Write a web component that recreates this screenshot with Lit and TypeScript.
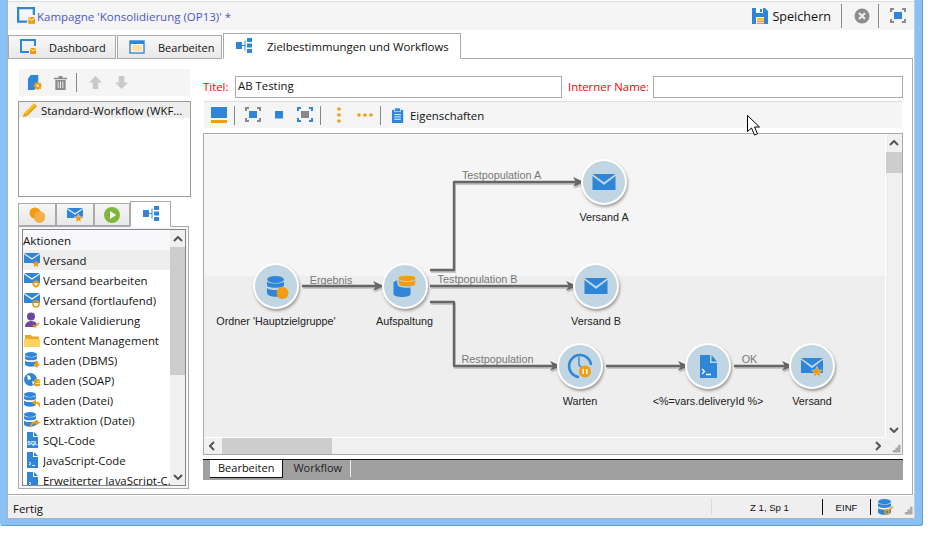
import { LitElement, css, html, svg, nothing } from "lit";
import { customElement } from "lit/decorators.js";

const BLUE = "#2f86d8";
const ORANGE = "#f39c12";
const DISC = "#c1d5e3";

// small icons, all drawn in a 16x16 box unless stated otherwise
const env = (x = 0, y = 2, w = 16, h = 11) => svg`
  <path fill="${BLUE}" d="M${x} ${y}h${w}l-${w / 2} ${h * 0.52}z"/>
  <path fill="${BLUE}" d="M${x} ${y + h * 0.12}l${w / 2} ${h * 0.56}l${w / 2} -${h * 0.56}v${h * 0.88}h-${w}z"/>`;
const star = (cx: number, cy: number, r: number, halo = "none") => {
  const pts: string[] = [];
  for (let i = 0; i < 10; i++) {
    const a = -Math.PI / 2 + (i * Math.PI) / 5;
    const q = i % 2 ? r * 0.42 : r;
    pts.push(`${(cx + q * Math.cos(a)).toFixed(1)},${(cy + q * Math.sin(a)).toFixed(1)}`);
  }
  return svg`<polygon fill="${ORANGE}" stroke="${halo}" paint-order="stroke" points="${pts.join(" ")}"/>`;
};
// three stacked discs, 12 wide and about 15 high before scaling
const db = (x = 1, y = 0, w = 12, c = BLUE) => svg`
  <g fill="${c}" transform="translate(${x} ${y}) scale(${w / 12})">
    <ellipse cx="6" cy="2.5" rx="6" ry="2.5"/>
    <path d="M0 3.8c1.5 2 10.5 2 12 0v3c-1.5 2-10.5 2-12 0z"/>
    <path d="M0 8.4c1.5 2 10.5 2 12 0v4c-1.5 3-10.5 3-12 0z"/>
  </g>`;
const doc = (extra = nothing as unknown) => svg`
  <path fill="${BLUE}" d="M3 0h6v5h5v11H3z"/><path fill="${BLUE}" d="M10 0l4 4h-4z"/>${extra}`;
const term = svg`<path fill="none" stroke="#fff" d="M5 10l2 1.5L5 13M8 13.5h3"/>`;
const i16 = (c: unknown, size = 16) =>
  html`<svg class="ic" width="${size}" height="${size}" viewBox="0 0 16 16">${c}</svg>`;

const campaign = svg`
  <path fill="none" stroke="${BLUE}" stroke-width="2" d="M9 13H1V1h14v6"/>
  <rect x="10" y="9" width="6" height="6" fill="${ORANGE}"/>
  <path fill="none" stroke="#fff" stroke-width=".8" d="M10 9.5l3 2.5 3-2.5"/>`;
const editWin = svg`
  <rect x="1" y="2" width="14" height="12" fill="#fff" stroke="${BLUE}" stroke-width="1.4"/>
  <rect x="1" y="2" width="14" height="3" fill="${BLUE}"/>
  <rect x="2.5" y="6" width="11" height="6.5" fill="#fbe3ae"/>`;
const flow = svg`
  <rect x="0" y="4" width="6" height="7" fill="${BLUE}"/>
  <path fill="none" stroke="${BLUE}" d="M6 7.5h3M9 2.5v10"/>
  <rect x="11" y="0" width="5" height="4" fill="${BLUE}"/>
  <rect x="11" y="5.5" width="5" height="4" fill="${BLUE}"/>
  <rect x="11" y="11" width="5" height="4" fill="${BLUE}"/>`;
const fitCorners = (c: string) => svg`
  <path fill="none" stroke="${c}" stroke-width="2" d="M1 4V1h3M12 1h3v3M15 11v3h-3M4 14H1v-3"/>`;
const expand = svg`${fitCorners("#8a8a8a")}<rect x="4" y="4" width="8" height="7" fill="${BLUE}"/>`;
const shrink = svg`${fitCorners(BLUE)}<rect x="4" y="4" width="8" height="7" fill="#888"/>`;
const disk = svg`
  <path fill="${BLUE}" d="M0 0h13l3 3v13H0z"/>
  <rect x="4" y="0" width="7" height="5" fill="#fff"/><rect x="8" y="1" width="2" height="3" fill="${BLUE}"/>
  <rect x="4" y="9" width="8" height="7" fill="#fff"/>
  <path stroke="${ORANGE}" stroke-width="1.4" d="M5 11h7M5 13.2h7M5 15.4h7"/>`;
const closeBtn = svg`
  <circle cx="8" cy="8" r="7.5" fill="#8c8c8c"/>
  <path stroke="#eee" stroke-width="2.2" d="M5 5l6 6M11 5l-6 6"/>`;
const trash = svg`
  <path fill="#8a8a8a" d="M1 3h14v1.6H1zM6 1h4v2H6z"/><path fill="#8a8a8a" d="M2.5 5.4h11V16h-11z"/>
  <path stroke="#f5f5f5" d="M5.5 7v7M8 7v7M10.5 7v7"/>`;
const newWf = svg`
  <path fill="${BLUE}" d="M4 0h8v8l-4 8H1V4z"/>
  <circle cx="11.5" cy="11.5" r="3.6" fill="${ORANGE}"/>
  <path stroke="${ORANGE}" stroke-width="1.2" d="M11.5 6.8v9.4M6.8 11.5h9.4M8.3 8.3l6.4 6.4M14.7 8.3l-6.4 6.4"/>
  <circle cx="11.5" cy="11.5" r="1.3" fill="#fff"/>`;
const up = svg`<path fill="#c9c9c9" d="M8 1l7 7h-4v7H5V8H1z"/>`;
const down = svg`<path fill="#c9c9c9" d="M5 1h6v7h4l-7 7-7-7h4z"/>`;
const pencil = svg`
  <path fill="#f7c325" d="M12 1l3 3L5 14l-3-3z"/><path fill="#e89b0c" d="M2 11l3 3-4 1z"/>
  <path fill="#e0a010" d="M5 14L15 4l-1-1L3.6 12.4z"/>`;
const layoutIc = svg`<rect y="0" width="16" height="11" fill="${BLUE}"/><rect y="13" width="16" height="3" fill="${ORANGE}"/>`;
const dotsV = svg`<circle cx="8" cy="2" r="1.8" fill="${ORANGE}"/><circle cx="8" cy="8" r="1.8" fill="${ORANGE}"/><circle cx="8" cy="14" r="1.8" fill="${ORANGE}"/>`;
const dotsH = svg`<circle cx="2" cy="8" r="1.8" fill="${ORANGE}"/><circle cx="8" cy="8" r="1.8" fill="${ORANGE}"/><circle cx="14" cy="8" r="1.8" fill="${ORANGE}"/>`;
const clipboard = svg`
  <path fill="${BLUE}" d="M1 2h12v14H1z"/><rect x="4" y="0" width="6" height="4" fill="${BLUE}" stroke="#f5f5f5" stroke-width=".7"/>
  <path stroke="#fff" d="M3.5 7h7M3.5 9.5h7M3.5 12h7"/>`;
const gear = (cx: number, cy: number, r = 2.4) => svg`
  <circle cx="${cx}" cy="${cy}" r="${r}" fill="none" stroke="${ORANGE}" stroke-width="1.7"/>
  <path stroke="${ORANGE}" d="M${cx} ${cy - r - 1.7}v1M${cx} ${cy + r + .7}v1M${cx - r - 1.7} ${cy}h1M${cx + r + .7} ${cy}h1"/>`;

const tabCircles = svg`<circle cx="6" cy="6" r="5.5" fill="${ORANGE}"/><circle cx="10.5" cy="10" r="5.5" fill="#f5b04a" stroke="${ORANGE}" stroke-width=".5"/>`;
const tabMail = svg`${env(0, 1, 16, 10)}${star(11.5, 11.5, 4.2, "#f0f0f0")}`;
const tabPlay = svg`<circle cx="8" cy="8" r="8" fill="#7db83a"/><path fill="#fff" d="M6 4l6 4-6 4z"/>`;

const ACTIONS: { label: string; icon: unknown }[] = [
  { label: "Versand", icon: svg`${env(0, 1, 16, 10)}${star(12, 12, 4)}` },
  { label: "Versand bearbeiten", icon: svg`${env(0, 1, 16, 10)}${gear(12, 12)}` },
  { label: "Versand (fortlaufend)", icon: svg`${env(0, 1, 16, 10)}<circle cx="12" cy="12" r="3" fill="none" stroke="${ORANGE}" stroke-width="1.6"/>` },
  { label: "Lokale Validierung", icon: svg`
      <circle cx="7" cy="4.5" r="4" fill="#6b4a9c"/><path fill="#6b4a9c" d="M1 15c0-4 3-6 6-6s5 1 6 3l-3 3z"/>
      <path fill="none" stroke="${ORANGE}" stroke-width="1.5" d="M9 13l2 2 4-4"/>` },
  { label: "Content Management", icon: svg`
      <path fill="#eaa92a" d="M1 3h6l1 1.5h7V8H1z"/><path fill="#fcd45f" d="M0 7h16v8H0z"/>` },
  { label: "Laden (DBMS)", icon: svg`${db(1, 0, 12)}<path fill="${ORANGE}" d="M11 9h3v3h2l-3.5 4L9 12h2z"/>` },
  { label: "Laden (SOAP)", icon: svg`
      <circle cx="6.5" cy="7.5" r="6.5" fill="${BLUE}"/><path fill="#fff" d="M3 3l3 1 1 3-3 1zM8 9l3 1-2 3z"/>${db(10, 7, 6, ORANGE)}` },
  { label: "Laden (Datei)", icon: svg`${db(0, 0, 12)}<path fill="none" stroke="${ORANGE}" stroke-width="1.8" d="M16 15c0-3-2-4.5-5-4.5"/><path fill="${ORANGE}" d="M12 7.5v6l-4-3z"/>` },
  { label: "Extraktion (Datei)", icon: svg`${db(0, 0, 12)}<path fill="none" stroke="${ORANGE}" stroke-width="1.8" d="M7 15c0-3 2-4.5 5-4.5"/><path fill="${ORANGE}" d="M12 7.5v6l4-3z"/>` },
  { label: "SQL-Code", icon: doc(svg`<text x="8.5" y="13" text-anchor="middle" class="sql">SQL</text>`) },
  { label: "JavaScript-Code", icon: doc(term) },
  { label: "Erweiterter JavaScript-C...", icon: doc(term) },
];

const NODES = [
  { x: 276, y: 286, label: "Ordner 'Hauptzielgruppe'", icon: svg`
      ${db(-9, -10, 17)}<circle cx="6.5" cy="7" r="6" fill="${ORANGE}"/>` },
  { x: 404.5, y: 286, label: "Aufspaltung", icon: svg`
      <path fill="${BLUE}" d="M-11.5 -3c0-4 17-4 17 0v11c0 4-17 4-17 0z"/>
      <path fill="${ORANGE}" stroke="${DISC}" stroke-width="1.4" d="M-7 -8c0-4 18-4 18 0v6c0 4-18 4-18 0z"/>
      <path fill="none" stroke="${DISC}" d="M-6.5 -7c2 3.5 15 3.5 17 0"/>` },
  { x: 604, y: 182, label: "Versand A", icon: env(-11.5, -8, 23, 16) },
  { x: 596, y: 286, label: "Versand B", icon: env(-11.5, -8, 23, 16) },
  { x: 580, y: 366, label: "Warten", icon: svg`
      <path fill="none" stroke="${BLUE}" stroke-width="2.5" d="M-1 11A11 11 0 1 1 11 -1"/>
      <path fill="none" stroke="${BLUE}" stroke-width="1.4" d="M-1 -9v8l4 4"/>
      <circle cx="5" cy="5.5" r="6" fill="${ORANGE}"/><path stroke="#fff" stroke-width="1.5" d="M3.2 3v5M6.8 3v5"/>` },
  { x: 708, y: 366, label: "<%=vars.deliveryId %>", icon: svg`
      <path fill="${BLUE}" d="M-8 -11h10v8h7v15h-17z"/><path fill="${BLUE}" d="M3.5 -11l5.5 6.5h-5.5z"/>
      <path fill="none" stroke="#fff" stroke-width="1.3" d="M-6 3l2.5 2.5L-6 8M-2 8.5h5"/>` },
  { x: 812, y: 366, label: "Versand", icon: svg`${env(-11, -8, 22, 15)}${star(5, 6, 5.5, DISC)}` },
];

const WIRES = [
  { d: "M302 286H376", label: "Ergebnis", lx: 331, ly: 280 },
  { d: "M430 270H454V182H576", label: "Testpopulation A", lx: 501.5, ly: 175 },
  { d: "M430 286H569", label: "Testpopulation B", lx: 477.5, ly: 279 },
  { d: "M430 302H454V366H553", label: "Restpopulation", lx: 497.5, ly: 359 },
  { d: "M606 366H681", label: "", lx: 0, ly: 0 },
  { d: "M734 366H785", label: "OK", lx: 749.5, ly: 359 },
];

@customElement("app-root")
export class AppRoot extends LitElement {
  protected render() {
    return html`
      <div class="window">
        <div class="client">
          ${this.renderHeader()}
          ${this.renderTabs()}
          <div class="pane">
            ${this.renderLeft()}
            ${this.renderRight()}
          </div>
          ${this.renderStatus()}
        </div>
      </div>
      <svg class="cursor" width="14" height="22" viewBox="0 0 14 22">
        <path fill="#fff" stroke="#000" d="M.5.5v16l4-3.5 3 7 3-1.2-3-6.8h5z"/>
      </svg>
    `;
  }

  private renderHeader() {
    return html`
      <header class="head">
        ${i16(campaign, 18)}
        <span class="title">Kampagne 'Konsolidierung (OP13)' *</span>
        <span class="spacer"></span>
        ${i16(disk)}
        <span class="save">Speichern</span>
        <i class="sep tall first"></i>
        ${i16(closeBtn)}
        <i class="sep tall"></i>
        ${i16(expand)}
      </header>
    `;
  }

  private renderTabs() {
    return html`
      <nav class="tabs">
        <div class="tab" style="width:108px">${i16(campaign)}<span>Dashboard</span></div>
        <div class="tab" style="width:105px">${i16(editWin)}<span>Bearbeiten</span></div>
        <div class="tab active" style="width:238px">${i16(flow)}<span>Zielbestimmungen und Workflows</span></div>
        <div class="tabline"></div>
      </nav>
    `;
  }

  private renderLeft() {
    return html`
      <aside class="left">
        <div class="bar lbar">
          ${i16(newWf, 15)}${i16(trash, 15)}
          <i class="sep"></i>
          ${i16(up, 15)}${i16(down, 15)}
        </div>
        <div class="wf-list">
          <div class="wf-row">${i16(pencil)}<span>Standard-Workflow (WKF...</span></div>
        </div>
        <div class="mini-tabs">
          <div class="mini">${i16(tabCircles)}</div>
          <div class="mini">${i16(tabMail)}</div>
          <div class="mini third">${i16(tabPlay)}</div>
          <div class="mini active">${i16(flow)}</div>
        </div>
        <div class="palette">
          <div class="actions">
            <div class="rows">
              <div class="act-head">Aktionen</div>
              ${ACTIONS.map(
                (a, i) => html`<div class="act ${i === 0 ? "sel" : ""}">${i16(a.icon)}<span>${a.label}</span></div>`
              )}
            </div>
            <div class="vscroll small">
              <svg width="10" height="6" viewBox="0 0 10 6"><path class="chev" d="M1 5l4-4 4 4"/></svg>
              <div class="thumb" style="height:128px"></div>
              <span class="spacer"></span>
              <svg width="10" height="6" viewBox="0 0 10 6"><path class="chev" d="M1 1l4 4 4-4"/></svg>
            </div>
          </div>
        </div>
      </aside>
    `;
  }

  private renderRight() {
    return html`
      <section class="right">
        <div class="fields">
          <label class="l1">Titel:</label>
          <div class="input grow1">AB Testing</div>
          <label class="l2">Interner Name:</label>
          <div class="input grow2"></div>
        </div>
        <div class="bar rbar">
          ${i16(layoutIc)}<i class="sep"></i>
          ${i16(expand)}
          <svg class="ic" width="16" height="16" viewBox="0 0 16 16"><rect x="4" y="4" width="8" height="7.5" fill="${BLUE}"/></svg>
          ${i16(shrink)}<i class="sep"></i>
          ${i16(dotsV)}${i16(dotsH)}<i class="sep"></i>
          ${i16(clipboard, 15)}
          <span class="props">Eigenschaften</span>
        </div>
        ${this.renderDiagram()}
        <div class="strip">
          <div class="strip-tab on">Bearbeiten</div>
          <div class="strip-tab">Workflow</div>
        </div>
      </section>
    `;
  }

  private renderDiagram() {
    return html`
      <div class="diagram">
        <div class="d-top">
          <div class="canvas">
            <div class="band"></div>
            <svg class="wires" width="682" height="304" viewBox="204 134 682 304">
              <defs>
                <marker id="head" markerWidth="14" markerHeight="12" refX="3" refY="6" orient="auto" markerUnits="userSpaceOnUse">
                  <path fill="#666" d="M0 1l11 5-11 5 3-5z"/>
                </marker>
                <marker id="head-sh" markerWidth="14" markerHeight="12" refX="3" refY="6" orient="auto" markerUnits="userSpaceOnUse">
                  <path fill="#c0c0c0" d="M0 1l11 5-11 5 3-5z"/>
                </marker>
              </defs>
              ${WIRES.map(
                (w) => svg`
                  <path d="${w.d}" transform="translate(1 2)" fill="none" stroke="#c6c6c6" stroke-width="2" marker-end="url(#head-sh)"/>
                  <path d="${w.d}" fill="none" stroke="#666" stroke-width="2.4" stroke-linejoin="round" marker-end="url(#head)"/>
                  ${w.label
                    ? svg`<text x="${w.lx}" y="${w.ly + 4}" text-anchor="middle" class="wire-label">${w.label}</text>`
                    : nothing}`
              )}
            </svg>
            ${NODES.map(
              (n) => html`
                <div class="node" style="left:${n.x - 204 - 60}px;top:${n.y - 134 - 23}px">
                  <div class="disc">
                    <svg width="30" height="30" viewBox="-15 -15 30 30">${n.icon}</svg>
                  </div>
                  <div class="node-label">${n.label}</div>
                </div>
              `
            )}
          </div>
          <div class="vscroll big">
            <svg width="10" height="6" viewBox="0 0 10 6"><path class="chev" d="M1 5l4-4 4 4"/></svg>
            <div class="thumb" style="height:21px"></div>
            <span class="spacer"></span>
            <svg width="10" height="6" viewBox="0 0 10 6"><path class="chev" d="M1 1l4 4 4-4"/></svg>
          </div>
        </div>
        <div class="hscroll">
          <svg width="6" height="10" viewBox="0 0 6 10"><path class="chev" d="M5 1L1 5l4 4"/></svg>
          <div class="hthumb"></div>
          <span class="spacer"></span>
          <svg width="6" height="10" viewBox="0 0 6 10"><path class="chev" d="M1 1l4 4-4 4"/></svg>
          ${this.grip()}
        </div>
      </div>
    `;
  }

  private grip() {
    return html`<svg class="grip" width="9" height="9" viewBox="0 0 9 9">
      <path fill="#aaa" d="M6 0h3v3H6zM3 3h3v3H3zM6 3h3v3H6zM0 6h3v3H0zM3 6h3v3H3zM6 6h3v3H6z" transform="scale(.85) translate(1 1)"/>
    </svg>`;
  }

  private renderStatus() {
    return html`
      <footer class="status">
        <span class="st-text">Fertig</span>
        <span class="spacer"></span>
        <i class="st-sep light"></i>
        <span class="st-pos">Z 1, Sp 1</span>
        <i class="st-sep"></i>
        <span class="st-ins">EINF</span>
        <i class="st-sep"></i>
        <svg class="st-db" width="16" height="16" viewBox="0 0 16 16">
          ${db(0, 0, 13)}
          <circle cx="9" cy="13" r="2" fill="none" stroke="${ORANGE}" stroke-width="1.4"/>
          <path stroke="${ORANGE}" stroke-width="1.6" d="M10.5 11.5l4.5-4"/>
        </svg>
        ${this.grip()}
      </footer>
    `;
  }

  static styles = css`
    :host {
      display: block;
      position: relative;
      width: 943px;
      height: 546px;
      background: #fff;
      font-family: "Open Sans", "Noto Sans", sans-serif;
      font-size: 11.4px;
      color: #111;
      overflow: hidden;
    }

    .spacer {
      flex: 1;
    }

    .ic {
      flex: none;
      display: block;
    }

    .sql {
      font: bold 5px "Liberation Sans", sans-serif;
      fill: #fff;
    }

    .window {
      box-sizing: border-box;
      width: 923px;
      height: 526px;
      padding: 0 8px 7px 7px;
      background: #8ac1f5;
      box-shadow: inset -1px -1px 0 #6d9cc8;
      border-radius: 0 0 3px 3px;
    }

    .client {
      box-sizing: border-box;
      height: 100%;
      display: flex;
      flex-direction: column;
      padding-top: 1px;
      background: #fff;
      border-left: 1px solid #a9b4c0;
      border-right: 1px solid #c4ccd4;
    }

    .head {
      box-sizing: border-box;
      flex: none;
      height: 29px;
      display: flex;
      align-items: center;
      padding: 0 8px 0 9px;
      background: #f5f5f5;
      border-top: 1px solid #ddd;
    }

    .title {
      margin-left: 2px;
      font-size: 11.5px;
      color: #4a55c8;
    }

    .save {
      margin-left: 4px;
      font-size: 12.6px;
      color: #111;
    }

    .sep {
      flex: none;
      display: block;
      width: 1px;
      height: 19px;
      background: #888;
    }

    .sep.tall {
      height: 24px;
      margin: 0 11px 0 8px;
    }

    .sep.tall.first {
      margin: 0 12px 0 10px;
    }

    .tabs {
      flex: none;
      height: 29px;
      display: flex;
      align-items: flex-end;
      background: #fff;
    }

    .tab {
      box-sizing: border-box;
      height: 24px;
      display: flex;
      align-items: center;
      gap: 13px;
      padding-left: 11px;
      font-size: 11px;
      background: linear-gradient(#f8f8f8, #e8e8e8);
      border: 1px solid #aaa;
      margin-right: 1px;
    }

    .tab.active {
      height: 26px;
      font-size: 11.4px;
      background: #fff;
      border-bottom-color: #fff;
      margin-right: 0;
      padding-left: 12px;
      gap: 15px;
    }

    .tabline {
      flex: 1;
      height: 0;
      border-bottom: 1px solid #aaa;
      border-right: 1px solid #aaa;
      margin-right: 1px;
    }

    .pane {
      flex: 1;
      min-height: 0;
      display: flex;
      gap: 12px;
      padding: 10px 9px 6px 10px;
      margin-right: 1px;
      border-right: 1px solid #aaa;
      border-bottom: 1px solid #aaa;
      background: #fff;
    }

    .left {
      flex: none;
      width: 173px;
      display: flex;
      flex-direction: column;
    }

    .bar {
      display: flex;
      align-items: center;
      background: #f5f5f5;
    }

    .lbar {
      height: 27px;
      margin-left: 1px;
      width: 171px;
      padding-left: 8px;
      gap: 11px;
      box-sizing: border-box;
      flex: none;
    }

    .lbar .sep {
      margin: 0 0 0 -3px;
    }

    .wf-list {
      flex: none;
      box-sizing: border-box;
      height: 96px;
      margin-top: 5px;
      border: 1px solid #999;
      background: #fff;
    }

    .wf-row {
      height: 16px;
      display: flex;
      align-items: center;
      gap: 3px;
      padding-left: 3px;
      background: #eee;
    }

    .mini-tabs {
      flex: none;
      display: flex;
      align-items: flex-end;
      height: 26px;
      margin-top: 3px;
    }

    .mini {
      box-sizing: border-box;
      width: 38px;
      height: 23px;
      display: flex;
      align-items: center;
      justify-content: center;
      background: linear-gradient(#f6f6f6, #e8e8e8);
      border: 1px solid #aaa;
    }

    .mini.third {
      width: 36px;
    }

    .mini.active {
      width: 41px;
      height: 26px;
      background: #fff;
      border-bottom: 1px solid #fff;
      margin-bottom: -1px;
      position: relative;
    }

    .palette {
      flex: none;
      box-sizing: border-box;
      height: 263px;
      width: 171px;
      border: 1px solid #aaa;
      padding: 2px 2px 2px 3px;
      background: #f7f7f7;
    }

    .actions {
      box-sizing: border-box;
      height: 100%;
      display: flex;
      border: 1px solid #808890;
      background: #fff;
      overflow: hidden;
    }

    .rows {
      flex: 1;
      min-width: 0;
      overflow: hidden;
    }

    .act-head {
      height: 20px;
      line-height: 21px;
      background: #f8f8fa;
      font-size: 11.6px;
    }

    .act {
      height: 20px;
      display: flex;
      align-items: center;
      gap: 3px;
      padding-left: 1px;
      white-space: nowrap;
    }

    .act span {
      overflow: hidden;
    }

    .act.sel {
      background: #eeeeee;
    }

    .vscroll {
      flex: none;
      width: 15px;
      display: flex;
      flex-direction: column;
      align-items: center;
      background: #f0f0f0;
    }

    .vscroll > svg {
      flex: none;
      margin: 6px 0 5px;
    }

    .thumb {
      flex: none;
      width: 100%;
      background: #cdcdcd;
    }

    .chev {
      fill: none;
      stroke: #555;
      stroke-width: 2;
    }

    .right {
      flex: 1;
      min-width: 0;
      display: flex;
      flex-direction: column;
    }

    .fields {
      flex: none;
      display: flex;
      align-items: center;
      margin-top: 7px;
      height: 22px;
    }

    .fields label {
      color: #f00;
      white-space: nowrap;
      margin-top: -2px;
    }

    .l1 {
      width: 32px;
    }

    .l2 {
      width: 85px;
    }

    .input {
      box-sizing: border-box;
      height: 22px;
      line-height: 18px;
      border: 1px solid #aaa;
      padding-left: 2px;
      background: #fff;
    }

    .grow1 {
      width: 327px;
      margin-right: 6px;
    }

    .grow2 {
      width: 250px;
    }

    .rbar {
      flex: none;
      box-sizing: border-box;
      height: 27px;
      margin: 3px 0 5px 1px;
      width: 698px;
      padding-left: 7px;
      gap: 5px;
      border-top: 1px solid #ddd;
    }

    .rbar .sep {
      margin: 0 5px 0 2px;
    }

    .rbar .ic + .ic {
      margin-left: 5px;
    }

    .props {
      margin-left: -1px;
    }

    .diagram {
      flex: none;
      box-sizing: border-box;
      width: 700px;
      height: 322px;
      display: flex;
      flex-direction: column;
      border: 1px solid #aaa;
      background: #f0f0f0;
    }

    .d-top {
      flex: 1;
      min-height: 0;
      display: flex;
    }

    .canvas {
      position: relative;
      flex: 1;
      overflow: hidden;
      background: #f5f5f5;
      border-bottom: 1px solid #fff;
      border-right: 1px solid #fff;
    }

    .band {
      position: absolute;
      left: 0;
      right: 0;
      top: 142px;
      bottom: 0;
      background: #eeeeee;
    }

    .wires {
      position: absolute;
      left: 0;
      top: 0;
    }

    .wire-label {
      font: 10.8px "Liberation Sans", Arial, sans-serif;
      fill: #777;
    }

    .node {
      position: absolute;
      width: 120px;
      display: flex;
      flex-direction: column;
      align-items: center;
    }

    .disc {
      box-sizing: border-box;
      width: 46px;
      height: 46px;
      border-radius: 50%;
      display: flex;
      align-items: center;
      justify-content: center;
      background: #c1d5e3;
      border: 2px solid #fff;
      box-shadow: 1px 2px 3px rgba(0, 0, 0, 0.35);
    }

    .node-label {
      margin-top: 5px;
      font: 10.8px/14px "Liberation Sans", Arial, sans-serif;
      color: #222;
      white-space: nowrap;
    }

    .vscroll.big {
      width: 16px;
    }

    .vscroll.big > svg:first-child {
      margin: 6px 0 6px;
    }

    .vscroll.big > svg:last-child {
      margin-bottom: 5px;
    }

    .hscroll {
      flex: none;
      height: 16px;
      display: flex;
      align-items: center;
      padding-left: 5px;
      padding-right: 0;
      background: #f0f0f0;
    }

    .hthumb {
      width: 110px;
      height: 100%;
      margin-left: 7px;
      background: #cdcdcd;
    }

    .hscroll .grip {
      margin: 4px 1px 0 11px;
    }

    .strip {
      flex: none;
      height: 21px;
      margin-top: 4px;
      display: flex;
      align-items: flex-start;
      padding-left: 7px;
      width: 700px;
      box-sizing: border-box;
      background: #a0a0a0;
      border-top: 1px solid #111;
      font-size: 11px;
    }

    .strip-tab {
      height: 17px;
      line-height: 16px;
      padding: 0 8px 0 10px;
      color: #222;
      border-right: 1px solid #eee;
    }

    .strip-tab.on {
      background: #fff;
      color: #111;
      padding: 0 8px;
      border-right: 1px solid #111;
      border-bottom: 1px solid #111;
    }

    .status {
      box-sizing: border-box;
      flex: none;
      height: 23px;
      display: flex;
      align-items: center;
      padding-left: 5px;
      margin-top: 1px;
      background: #efefef;
      border-bottom: 1px solid #a9b4c0;
    }

    .st-text {
      margin-top: 2px;
    }

    .st-sep {
      flex: none;
      width: 1px;
      height: 16px;
      background: #111;
    }

    .st-sep.light {
      background: #d8d8d8;
    }

    .st-pos {
      box-sizing: border-box;
      width: 110px;
      padding-left: 5px;
      text-align: center;
      font: 9.6px "Liberation Sans", Arial, sans-serif;
    }

    .st-ins {
      width: 47px;
      text-align: center;
      font: 9.6px "Liberation Sans", Arial, sans-serif;
    }

    .st-db {
      margin-left: 7px;
    }

    .status .grip {
      margin: 6px 1px 0 10px;
    }

    .cursor {
      position: absolute;
      left: 747px;
      top: 115px;
    }
  `;
}
